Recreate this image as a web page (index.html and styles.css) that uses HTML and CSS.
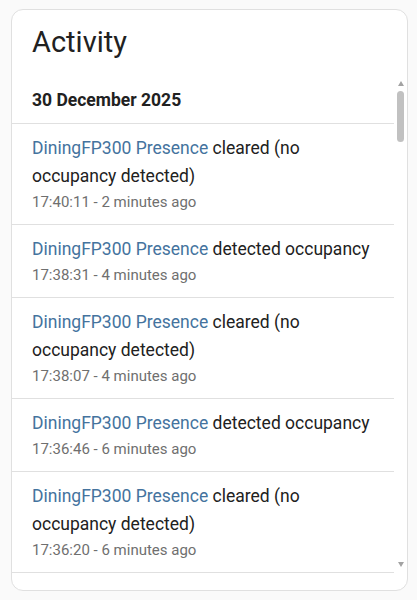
FILE: index.html
```html
<!DOCTYPE html>
<html lang="en">
<head>
  <meta charset="UTF-8">
  <meta name="viewport" content="width=device-width, initial-scale=1.0">
  <title>Activity</title>
  <link rel="stylesheet" href="styles.css">
</head>
<body>
  <div class="card">
    <h1 class="card-title">Activity</h1>

    <div class="log-wrap">
      <div class="log">
        <div class="log-date">30 December 2025</div>

        <div class="entry">
          <div class="message"><a href="#">DiningFP300 Presence</a> cleared (no occupancy detected)</div>
          <div class="time">17:40:11 - 2 minutes ago</div>
        </div>

        <div class="entry">
          <div class="message"><a href="#">DiningFP300 Presence</a> detected occupancy</div>
          <div class="time">17:38:31 - 4 minutes ago</div>
        </div>

        <div class="entry">
          <div class="message"><a href="#">DiningFP300 Presence</a> cleared (no occupancy detected)</div>
          <div class="time">17:38:07 - 4 minutes ago</div>
        </div>

        <div class="entry">
          <div class="message"><a href="#">DiningFP300 Presence</a> detected occupancy</div>
          <div class="time">17:36:46 - 6 minutes ago</div>
        </div>

        <div class="entry">
          <div class="message"><a href="#">DiningFP300 Presence</a> cleared (no occupancy detected)</div>
          <div class="time">17:36:20 - 6 minutes ago</div>
        </div>
      </div>

      <!-- pasek przewijania -->
      <div class="scrollbar">
        <div class="sb-btn"><span class="arrow-up"></span></div>
        <div class="sb-thumb"></div>
        <div class="sb-track"></div>
        <div class="sb-btn sb-btn-down"><span class="arrow-down"></span></div>
      </div>
    </div>
  </div>
</body>
</html>
```

FILE: styles.css
```css
body {
  margin: 0;
  padding: 9px 9px 9px 11px;
  background: #fafafa;
  font-family: Roboto, 'Noto Sans', sans-serif;
  color: #212121;
}

.card {
  background: #fff;
  border: 1px solid #e0e0e0;
  border-radius: 12px;
  padding-bottom: 15px;
}

.card-title {
  margin: 0;
  padding: 12px 20px 16px;
  font-size: 29px;
  font-weight: 400;
  line-height: 40px;
}

.log-wrap {
  display: flex;
  height: 497px;
}

.log {
  flex: 1;
  overflow: hidden;
}

.scrollbar {
  width: 13px;
  display: flex;
  flex-direction: column;
  align-items: center;
}

.sb-btn {
  height: 13px;
  display: flex;
  justify-content: center;
  align-items: flex-start;
  padding-top: 3px;
  box-sizing: border-box;
}

.sb-btn-down {
  padding-top: 0;
  align-items: flex-end;
  padding-bottom: 8px;
}

.arrow-up {
  width: 0;
  height: 0;
  border-left: 3px solid transparent;
  border-right: 3px solid transparent;
  border-bottom: 5px solid #a3a3a3;
}

.arrow-down {
  width: 0;
  height: 0;
  border-left: 3px solid transparent;
  border-right: 3px solid transparent;
  border-top: 5px solid #a3a3a3;
}

.sb-thumb {
  width: 7px;
  height: 51px;
  background: #c1c1c1;
  border-radius: 4px;
}

.sb-track {
  flex: 1;
}

.log-date {
  padding: 11px 20px 12px;
  font-size: 17.5px;
  font-weight: 700;
  line-height: 22px;
  border-bottom: 1px solid #e0e0e0;
}

.entry {
  padding: 10px 20px;
  border-bottom: 1px solid #e0e0e0;
}

.message {
  font-size: 17.5px;
  line-height: 28px;
}

.message a {
  color: #44739e;
  text-decoration: none;
}

.time {
  font-size: 15px;
  line-height: 24px;
  color: #6f6f6f;
}
```
